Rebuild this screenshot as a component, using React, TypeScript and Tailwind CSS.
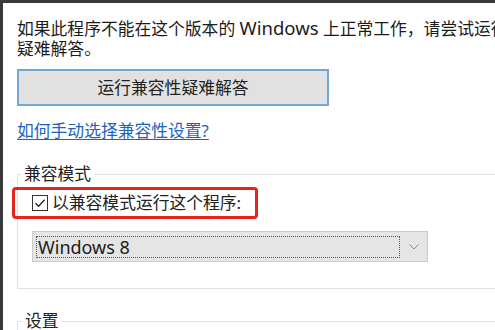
import React from "react";

const font = '"Noto Sans", "Noto Sans CJK SC", sans-serif';

export default function App() {
  return (
    <div
      className="w-[495px] h-[330px] overflow-hidden bg-white border-t-[3px] border-l-[3px] border-[#3a3a3a] text-[#1b1b1b]"
      style={{ fontFamily: font }}
    >
      <div className="w-[540px] pl-[14px] pt-[16px]">
        {/* 说明文字 */}
        <p className="text-[16.8px] leading-[20px] whitespace-nowrap">
          如果此程序不能在这个版本的 <span className="text-[18.5px] leading-none">Windows</span> 上正常工作，请尝试运行兼容性
          <br />
          疑难解答。
        </p>

        {/* 按钮 */}
        <button className="mt-[10px] w-[312px] h-[37px] bg-[#e1e1e1] border-2 border-[#6ea7de] text-[16.8px] text-[#222]">
          运行兼容性疑难解答
        </button>

        {/* 链接 */}
        <div className="mt-[15px] leading-[20px]">
          <a className="text-[16.8px] text-[#1d63c0] underline underline-offset-2 decoration-1">
            如何手动选择兼容性设置?
          </a>
        </div>

        {/* 兼容模式 */}
        <fieldset className="mt-[23px] border border-[#e0e0e0] pb-[26px]">
          <legend className="ml-[3px] px-[3px] text-[16.8px] leading-[20px] text-[#222]">
            兼容模式
          </legend>

          <div className="mt-[3px] ml-[-6px] w-[246px] h-[32px] border-[3px] border-[#e4251e] rounded-[4px] flex items-center pl-[17px]">
            <span className="w-[16px] h-[16px] border border-[#333] bg-white flex items-center justify-center">
              <svg width="12" height="12" viewBox="0 0 12 12">
                <path d="M1.5 6.2 L4.6 9.2 L10.6 2.8" fill="none" stroke="#222" strokeWidth="1.3" />
              </svg>
            </span>
            <span className="ml-[4px] text-[16.8px] leading-[20px] text-[#222]">
              以兼容模式运行这个程序:
            </span>
          </div>

          <div className="mt-[12px] ml-[14px] w-[396px] h-[31px] bg-[#e5e5e5] border border-[#cbcbcb] flex items-center pl-[3px]">
            <div className="w-[364px] h-[22px] border border-dotted border-[#555] flex items-center pl-[1px]">
              <span className="text-[18px] leading-[20px] text-[#1b1b1b]">Windows 8</span>
            </div>
            <svg className="ml-[9px]" width="10" height="6" viewBox="0 0 10 6">
              <path d="M0.5 0.5 L5 5 L9.5 0.5" fill="none" stroke="#8a8a8a" strokeWidth="1" />
            </svg>
          </div>
        </fieldset>

        {/* 设置 */}
        <fieldset className="mt-[22px] border border-[#e0e0e0] h-[60px]">
          <legend className="ml-[4px] px-[3px] text-[16.8px] leading-[20px] text-[#222]">
            设置
          </legend>
        </fieldset>
      </div>
    </div>
  );
}
